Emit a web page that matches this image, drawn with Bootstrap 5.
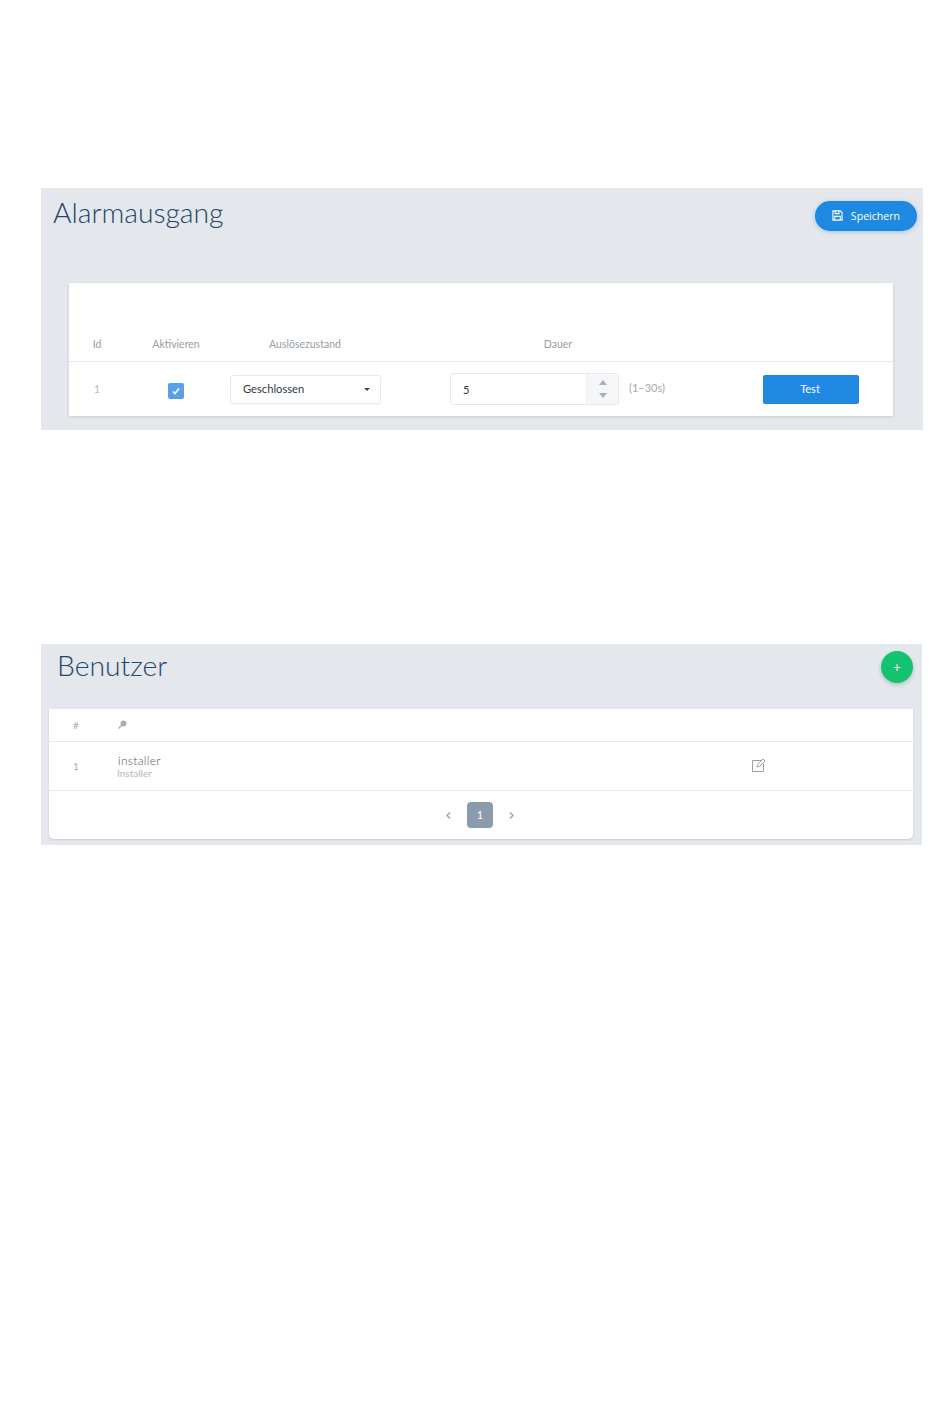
<!DOCTYPE html>
<html lang="de">
<head>
  <meta charset="UTF-8">
  <title>Alarmausgang</title>
  <link href="https://cdn.jsdelivr.net/npm/bootstrap@5.3.3/dist/css/bootstrap.min.css" rel="stylesheet">
  <style>
    html, body { background: #fff; }
    body { font-family: Lato, "Liberation Sans", sans-serif; padding: 188px 27px 0 41px; }

    .panel-grey { background: #e4e7ec; }
    .alarm-panel { height: 242px; padding: 13px 6px 0 12px; margin-bottom: 214px; }
    .user-panel { height: 201px; padding: 0 9px 6px 8px; width: 881px; }

    .panel-title { font-size: 28.3px; font-weight: 300; color: #24456a; line-height: 26px; margin: -2px 0 0; }
    .alarm-head { height: 82px; }
    .user-head { height: 65px; padding: 8px 0 0 8px; }
    .user-head .panel-title { line-height: 30px; }

    .btn-save { background: #1f88e0; color: #fff; height: 30px; width: 102px; border: 0; border-radius: 15px; font-size: 10.6px; box-shadow: 0 1px 4px rgba(31,136,224,.35); font-family: "Open Sans", sans-serif; padding-top: 1px !important; }
    .btn-save svg { margin-top: -3px; }
    .btn-add { background: #12c46f; width: 32px; height: 32px; margin: -1px 0 0; border: 0; border-radius: 50%; color: #fff; box-shadow: 0 2px 4px rgba(0,0,0,.18); font-size: 13px; line-height: 32px; }

    .alarm-card { margin: 0 24px 0 16px; height: 133px; background: #fff; box-shadow: 0 1px 3px rgba(0,0,0,.12); }
    .alarm-table { table-layout: fixed; width: 824px; margin: 0; }
    .alarm-table th { height: 78px; vertical-align: bottom; font-weight: 400; font-size: 10.5px; color: #979ca3; padding: 0 0 11px; text-align: center; border-bottom: 1px solid #e6e8eb; line-height: 12px; }
    .alarm-table td { height: 54px; vertical-align: middle; padding: 2px 0 0; text-align: center; border: 0; font-size: 11px; }
    .col-id { width: 56px; }
    .col-on { width: 102px; }
    .col-state { width: 156px; }
    .col-time { width: 350px; }

    .row-num { color: #b5babf; font-size: 11px; }
    .fake-check { width: 16px; height: 16px; background: #5aa0e6; border-radius: 2px; margin: 3px auto 0; }
    .fake-select { width: 151px; height: 29px; margin-left: 3px; border: 1px solid #e6e8eb; border-radius: 3px; padding: 0 10px 0 12px; font-size: 11.2px; color: #2e3b4a; box-shadow: 0 1px 1px rgba(0,0,0,.03); }
    .sel-caret { border-left: 3px solid transparent; border-right: 3px solid transparent; border-top: 3px solid #3a4654; }
    .time-cell { padding-left: 67px; }
    .fake-spin { width: 169px; height: 32px; border: 1px solid #e6e8eb; border-radius: 3px; font-size: 11px; color: #2e3b4a; text-align: left; }
    .spin-val { padding-left: 12px; padding-top: 1px; }
    .spin-box { width: 32px; background: #f5f6f8; border-left: 1px solid #eceef0; }
    .spin-up { border-left: 4px solid transparent; border-right: 4px solid transparent; border-bottom: 5px solid #a9afb6; }
    .spin-down { border-left: 4px solid transparent; border-right: 4px solid transparent; border-top: 5px solid #a9afb6; }
    .range-hint { color: #a3a8ae; font-size: 11px; padding-left: 10px; white-space: nowrap; margin-top: -3px; }
    .btn-test { background: #1f88e0; color: #fff; width: 96px; height: 29px; border: 0; border-radius: 2px; font-size: 11px; padding: 0 2px 0 0; margin-left: 30px; display: block; }

    .user-card { background: #fff; height: 130px; border-radius: 0 0 5px 5px; box-shadow: 0 1px 2px rgba(0,0,0,.12); }
    .user-top { height: 33px; border-bottom: 1px solid #e6e8eb; }
    .user-top svg { margin-top: -1px; }
    .user-row { height: 49px; border-bottom: 1px solid #e6e8eb; }
    .user-row svg { margin-top: -2px; }
    .user-num { width: 68px; padding-left: 24px; color: #a9aeb4; font-size: 10px; }
    .user-main { width: 634px; padding-top: 2px; }
    .user-name { font-size: 12px; color: #4a5560; line-height: 12px; font-weight: 300; letter-spacing: .3px; padding-left: 1px; }
    .user-sub { font-size: 10px; color: #b3b8bd; line-height: 12px; }

    .pager-box { height: 48px; gap: 10px; padding-right: 2px; }
    .pager-now { width: 26px; height: 26px; background: #8a9bab; color: #fff; border-radius: 4px; font-size: 11px; }
    .pager-arrow { width: 9px; height: 9px; }
  </style>
</head>
<body>
  <section class="panel-grey alarm-panel">
    <div class="d-flex justify-content-between align-items-start alarm-head">
      <h1 class="panel-title">Alarmausgang</h1>
      <button class="btn btn-save d-flex align-items-center justify-content-center gap-2 p-0" type="button">
        <svg width="11" height="11" viewBox="0 0 12 12" fill="none" stroke="#fff" stroke-width="1.2"><path d="M1 1h8l2 2v8H1z"/><path d="M3.500 1v3h4V1M3 11V7h6v4"/></svg>
        Speichern
      </button>
    </div>
    <div class="alarm-card">
      <table class="alarm-table">
        <thead>
          <tr>
            <th class="col-id">Id</th>
            <th class="col-on">Aktivieren</th>
            <th class="col-state">Auslösezustand</th>
            <th class="col-time">Dauer</th>
            <th></th>
          </tr>
        </thead>
        <tbody>
          <tr>
            <td><span class="row-num">1</span></td>
            <td>
              <div class="fake-check d-flex align-items-center justify-content-center">
                <svg width="10" height="10" viewBox="0 0 10 10" fill="none" stroke="#fff" stroke-width="1.6"><path d="M2 5.500l2 2 4-5"/></svg>
              </div>
            </td>
            <td>
              <div class="fake-select d-flex align-items-center justify-content-between">
                <span>Geschlossen</span><span class="sel-caret"></span>
              </div>
            </td>
            <td>
              <div class="time-cell d-flex align-items-center">
                <div class="fake-spin d-flex overflow-hidden">
                  <span class="spin-val flex-grow-1 d-flex align-items-center">5</span>
                  <span class="spin-box d-flex flex-column align-items-center justify-content-center gap-2">
                    <span class="spin-up"></span><span class="spin-down"></span>
                  </span>
                </div>
                <span class="range-hint">(1–30s)</span>
              </div>
            </td>
            <td>
              <button class="btn btn-test" type="button">Test</button>
            </td>
          </tr>
        </tbody>
      </table>
    </div>
  </section>

  <section class="panel-grey user-panel">
    <div class="d-flex justify-content-between align-items-start user-head">
      <h1 class="panel-title">Benutzer</h1>
      <button class="btn btn-add p-0" type="button">+</button>
    </div>
    <div class="user-card">
      <div class="user-top d-flex align-items-center">
        <span class="user-num">#</span>
        <svg width="10" height="10" viewBox="0 0 10 10" fill="#a9aeb4"><circle cx="6.500" cy="3.500" r="3"/><path d="M4.500 4.500l1 1L2 9 1 8z"/></svg>
      </div>
      <div class="user-row d-flex align-items-center">
        <span class="user-num">1</span>
        <div class="user-main">
          <div class="user-name">installer</div>
          <div class="user-sub">Installer</div>
        </div>
        <svg width="16" height="15" viewBox="0 0 16 15" fill="none" stroke="#9aa0a6" stroke-width="1"><path d="M10 2.500H1.500v11h11V6"/><path d="M6 9l.5-2.500L12 1l2 2-5.500 5.500z"/></svg>
      </div>
      <div class="pager-box d-flex align-items-center justify-content-center">
        <svg class="pager-arrow" viewBox="0 0 9 9" fill="none" stroke="#9aa0a6" stroke-width="1.4"><path d="M6 1.500L3 4.500l3 3"/></svg>
        <span class="pager-now d-flex align-items-center justify-content-center mx-1">1</span>
        <svg class="pager-arrow" viewBox="0 0 9 9" fill="none" stroke="#9aa0a6" stroke-width="1.4"><path d="M3 1.500l3 3-3 3"/></svg>
      </div>
    </div>
  </section>

  <script src="https://cdn.jsdelivr.net/npm/bootstrap@5.3.3/dist/js/bootstrap.bundle.min.js"></script>
</body>
</html>
